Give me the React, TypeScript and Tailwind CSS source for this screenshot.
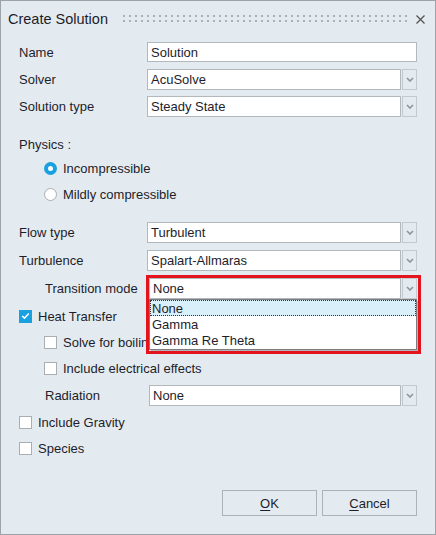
import React from "react";

const font = "font-['Liberation_Sans',Arial,sans-serif]";

function Chevron() {
  return (
    <svg width="8" height="5" viewBox="0 0 8 5">
      <path d="M1 1 L4 4 L7 1" fill="none" stroke="#8f9498" strokeWidth="1.6" />
    </svg>
  );
}

function Combo({ value, className = "" }: { value: string; className?: string }) {
  return (
    <div className={`flex h-[21px] gap-px ${className}`}>
      <div className="flex-1 bg-white border border-[#b3b8bc] flex items-center pl-[3px] text-[13px] leading-none">
        {value}
      </div>
      <div className="w-[15px] border border-[#c4c9cd] flex items-center justify-center">
        <Chevron />
      </div>
    </div>
  );
}

function Check({ checked = false }: { checked?: boolean }) {
  if (checked) {
    return (
      <div className="w-[13px] h-[13px] bg-[#18a0e0] flex items-center justify-center">
        <svg width="9" height="8" viewBox="0 0 9 8">
          <path d="M1.2 4 L3.5 6.2 L7.8 1.5" fill="none" stroke="white" strokeWidth="1.6" />
        </svg>
      </div>
    );
  }
  return <div className="w-[13px] h-[13px] bg-white border border-[#a9aeb3]" />;
}

function Radio({ checked = false }: { checked?: boolean }) {
  if (checked) {
    return (
      <div className="w-[13px] h-[13px] rounded-full bg-[#18a0e0] flex items-center justify-center">
        <div className="w-[5px] h-[5px] rounded-full bg-white" />
      </div>
    );
  }
  return <div className="w-[13px] h-[13px] rounded-full bg-white border border-[#a9aeb3]" />;
}

function Row({ label, children, className = "" }: { label: string; children: React.ReactNode; className?: string }) {
  return (
    <div className={`flex items-center ${className}`}>
      <div className="w-[128px] text-[13px] leading-none">{label}</div>
      <div className="flex-1">{children}</div>
    </div>
  );
}

export default function App() {
  return (
    <div className={`w-[436px] h-[535px] border border-[#9da3a8] bg-[#e4ebf0] text-[#1d1d2b] ${font} flex flex-col`}>
      {/* title bar */}
      <div className="h-[36px] flex items-center pl-[7px] pr-[10px]">
        <div className="text-[14.5px] leading-none">Create Solution</div>
        <svg className="ml-auto mr-[8px]" width="286" height="10" viewBox="0 0 286 10">
          <defs>
            <pattern id="grip" width="6" height="5" patternUnits="userSpaceOnUse">
              <rect x="1" y="1" width="2" height="2" fill="#a9afb4" />
            </pattern>
          </defs>
          <rect width="286" height="10" fill="url(#grip)" />
        </svg>
        <svg width="9" height="9" viewBox="0 0 9 9">
          <path d="M0.5 0.5 L8.5 8.5 M8.5 0.5 L0.5 8.5" stroke="#505050" strokeWidth="1.2" />
        </svg>
      </div>

      <div className="flex flex-col pl-[18px] pr-[18px] pt-[5px]">
        <Row label="Name" className="h-[20px]">
          <div className="h-[20px] bg-white border border-[#b3b8bc] flex items-center pl-[3px] text-[13px] leading-none">
            Solution
          </div>
        </Row>
        <Row label="Solver" className="mt-[7px]">
          <Combo value="AcuSolve" />
        </Row>
        <Row label="Solution type" className="mt-[6px]">
          <Combo value="Steady State" />
        </Row>

        <div className="mt-[17px] h-[20px] flex items-center text-[13px] leading-none">Physics :</div>
        <div className="mt-[4px] h-[20px] flex items-center gap-[6px] pl-[25px] text-[13px] leading-none">
          <Radio checked />
          <span>Incompressible</span>
        </div>
        <div className="mt-[6px] h-[20px] flex items-center gap-[6px] pl-[25px] text-[13px] leading-none">
          <Radio />
          <span>Mildly compressible</span>
        </div>

        <Row label="Flow type" className="mt-[18px]">
          <Combo value="Turbulent" />
        </Row>
        <Row label="Turbulence" className="mt-[7px]">
          <Combo value="Spalart-Allmaras" />
        </Row>

        <div className="mt-[7px] flex items-center relative z-10">
          <div className="w-[130px] pl-[26px] text-[13px] leading-none">Transition mode</div>
          <div className="flex-1 relative">
            <Combo value="None" />
            <div className="absolute left-0 right-0 top-[21px] h-[51px] bg-white border border-[#7c7c7c] shadow-[2px_2px_0_rgba(0,0,0,0.22)] text-[13px] leading-none">
              <div className="h-[16px] flex items-center pl-[2px] bg-[#d9eff9] outline outline-1 outline-dotted outline-[#333] -outline-offset-1">
                None
              </div>
              <div className="h-[16px] flex items-center pl-[2px]">Gamma</div>
              <div className="h-[16px] flex items-center pl-[2px]">Gamma Re Theta</div>
            </div>
            <div className="absolute left-[-3px] top-[-3px] w-[275px] h-[79px] border-[3px] border-[#e4141e] pointer-events-none" />
          </div>
        </div>

        <div className="mt-[7px] h-[20px] flex items-center gap-[6px] text-[13px] leading-none">
          <Check checked />
          <span>Heat Transfer</span>
        </div>
        <div className="mt-[6px] h-[20px] flex items-center gap-[6px] pl-[25px] text-[13px] leading-none">
          <Check />
          <span>Solve for boiling</span>
        </div>
        <div className="mt-[6px] h-[20px] flex items-center gap-[6px] pl-[25px] text-[13px] leading-none">
          <Check />
          <span>Include electrical effects</span>
        </div>

        <div className="mt-[7px] flex items-center">
          <div className="w-[130px] pl-[26px] text-[13px] leading-none">Radiation</div>
          <div className="flex-1">
            <Combo value="None" />
          </div>
        </div>

        <div className="mt-[6px] h-[20px] flex items-center gap-[6px] text-[13px] leading-none">
          <Check />
          <span>Include Gravity</span>
        </div>
        <div className="mt-[6px] h-[20px] flex items-center gap-[6px] text-[13px] leading-none">
          <Check />
          <span>Species</span>
        </div>

        <div className="mt-[32px] flex justify-end gap-[5px]">
          <button className="w-[95px] h-[26px] border border-[#adb2b6] bg-[#e4ebf0] text-[13px] leading-none">
            <span className="underline underline-offset-2">O</span>K
          </button>
          <button className="w-[95px] h-[26px] border border-[#adb2b6] bg-[#e4ebf0] text-[13px] leading-none">
            <span className="underline underline-offset-2">C</span>ancel
          </button>
        </div>
      </div>
    </div>
  );
}
